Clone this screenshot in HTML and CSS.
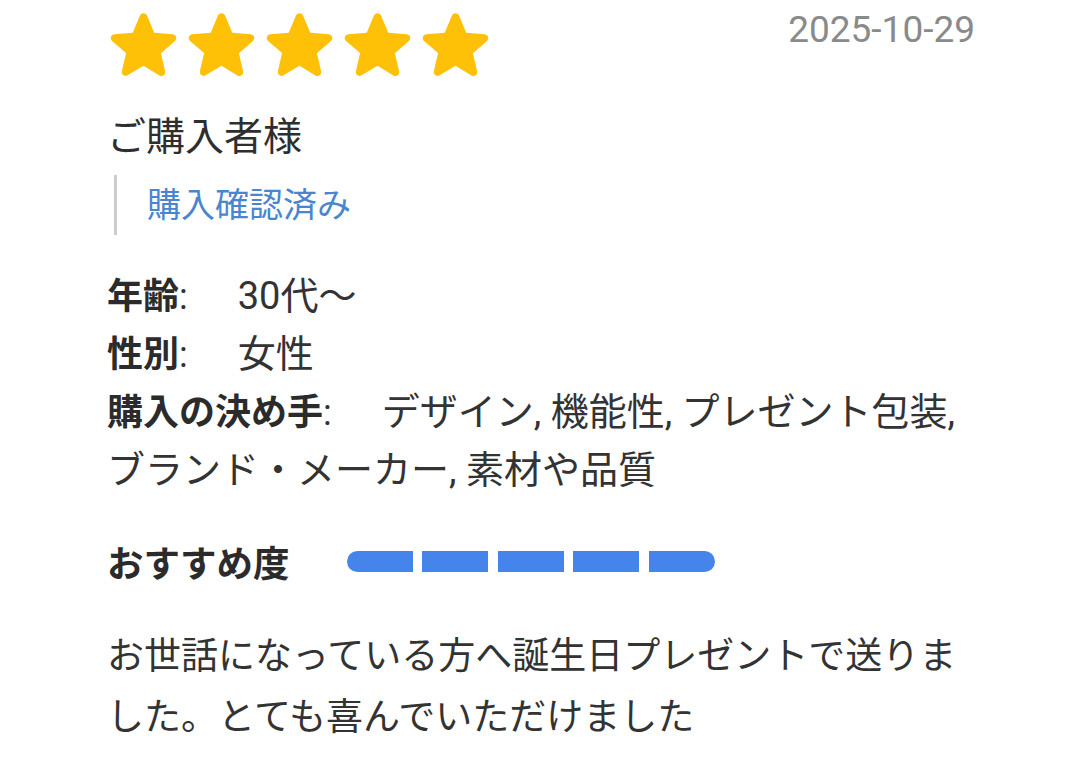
FILE: index.html
```html
<!DOCTYPE html>
<html lang="ja">
  <head>
    <meta charset="UTF-8" />
    <meta name="viewport" content="width=device-width, initial-scale=1.0" />
    <title>レビュー</title>
    <link rel="stylesheet" href="styles.css">
  </head>
  <body>
    <div class="review">
      <div class="review-top">
        <div class="stars">
          <svg class="star" viewBox="3 2.2 18 18"><path d="M12 17.27l4.15 2.51c.76.46 1.69-.22 1.49-1.08l-1.1-4.72 3.67-3.18c.67-.58.31-1.68-.57-1.75l-4.83-.41-1.89-4.46c-.34-.81-1.5-.81-1.84 0L9.19 8.63l-4.83.41c-.88.07-1.24 1.17-.57 1.75l3.67 3.18-1.1 4.72c-.2.86.73 1.54 1.49 1.08l4.15-2.5z"/></svg>
          <svg class="star" viewBox="3 2.2 18 18"><path d="M12 17.27l4.15 2.51c.76.46 1.69-.22 1.49-1.08l-1.1-4.72 3.67-3.18c.67-.58.31-1.68-.57-1.75l-4.83-.41-1.89-4.46c-.34-.81-1.5-.81-1.84 0L9.19 8.63l-4.83.41c-.88.07-1.24 1.17-.57 1.75l3.67 3.18-1.1 4.72c-.2.86.73 1.54 1.49 1.08l4.15-2.5z"/></svg>
          <svg class="star" viewBox="3 2.2 18 18"><path d="M12 17.27l4.15 2.51c.76.46 1.69-.22 1.49-1.08l-1.1-4.72 3.67-3.18c.67-.58.31-1.68-.57-1.75l-4.83-.41-1.89-4.46c-.34-.81-1.5-.81-1.84 0L9.19 8.63l-4.83.41c-.88.07-1.24 1.17-.57 1.75l3.67 3.18-1.1 4.72c-.2.86.73 1.54 1.49 1.08l4.15-2.5z"/></svg>
          <svg class="star" viewBox="3 2.2 18 18"><path d="M12 17.27l4.15 2.51c.76.46 1.69-.22 1.49-1.08l-1.1-4.72 3.67-3.18c.67-.58.31-1.68-.57-1.75l-4.83-.41-1.89-4.46c-.34-.81-1.5-.81-1.84 0L9.19 8.63l-4.83.41c-.88.07-1.24 1.17-.57 1.75l3.67 3.18-1.1 4.72c-.2.86.73 1.54 1.49 1.08l4.15-2.5z"/></svg>
          <svg class="star" viewBox="3 2.2 18 18"><path d="M12 17.27l4.15 2.51c.76.46 1.69-.22 1.49-1.08l-1.1-4.72 3.67-3.18c.67-.58.31-1.68-.57-1.75l-4.83-.41-1.89-4.46c-.34-.81-1.5-.81-1.84 0L9.19 8.63l-4.83.41c-.88.07-1.24 1.17-.57 1.75l3.67 3.18-1.1 4.72c-.2.86.73 1.54 1.49 1.08l4.15-2.5z"/></svg>
        </div>
        <div class="date">2025-10-29</div>
      </div>

      <div class="reviewer">ご購入者様</div>
      <div class="verified">購入確認済み</div>

      <div class="attrs">
        <div class="attr"><b class="attr-label">年齢</b>:<span class="attr-value">30代〜</span></div>
        <div class="attr"><b class="attr-label">性別</b>:<span class="attr-value">女性</span></div>
        <div class="attr"><b class="attr-label">購入の決め手</b>:<span class="attr-value">デザイン, 機能性, プレゼント包装, ブランド・メーカー, 素材や品質</span></div>
      </div>

      <div class="recommend">
        <b class="recommend-label">おすすめ度</b>
        <div class="meter">
          <span class="meter-seg"></span>
          <span class="meter-seg"></span>
          <span class="meter-seg"></span>
          <span class="meter-seg"></span>
          <span class="meter-seg"></span>
        </div>
      </div>

      <p class="comment">お世話になっている方へ誕生日プレゼントで送りました。とても喜んでいただけました</p>
    </div>
  </body>
</html>
```

FILE: styles.css
```css
body {
  margin: 0;
  background: #ffffff;
  font-family: Roboto, "Noto Sans CJK JP", sans-serif;
  color: #333333;
}

.review {
  width: 868px;
  padding: 8px 0 0 107px;
}

.review-top {
  display: flex;
  justify-content: space-between;
  align-items: flex-start;
}

.stars {
  display: flex;
  gap: 9px;
  margin-left: 2px;
}

.star {
  width: 69px;
  height: 69px;
  fill: #ffc107;
}

.date {
  font-size: 37px;
  line-height: 44px;
  color: #8a8a8a;
}

.reviewer {
  margin-top: 35px;
  font-size: 39px;
  line-height: 50px;
  color: #2e2e2e;
}

.verified {
  margin: 13px 0 0 7px;
  padding-left: 30px;
  border-left: 3px solid #cccccc;
  font-size: 34px;
  line-height: 60px;
  color: #4a85d0;
}

.attrs {
  margin-top: 33px;
}

.attr {
  font-size: 36px;
  line-height: 57px;
}

.attr-label {
  font-weight: bold;
  color: #2b2b2b;
}

.attr-value {
  margin-left: 50px;
  font-size: 38px;
}

.recommend {
  display: flex;
  align-items: center;
  margin-top: 33px;
  height: 57px;
}

.recommend-label {
  font-size: 36.5px;
  color: #2b2b2b;
}

.meter {
  display: flex;
  gap: 9.5px;
  margin-left: 57px;
}

.meter-seg {
  width: 66px;
  height: 21px;
  background: #4584ea;
}

.meter-seg:first-child {
  border-radius: 11px 0 0 11px;
}

.meter-seg:last-child {
  border-radius: 0 11px 11px 0;
}

.comment {
  margin: 36px 0 0;
  font-size: 37px;
  line-height: 61px;
}
```
